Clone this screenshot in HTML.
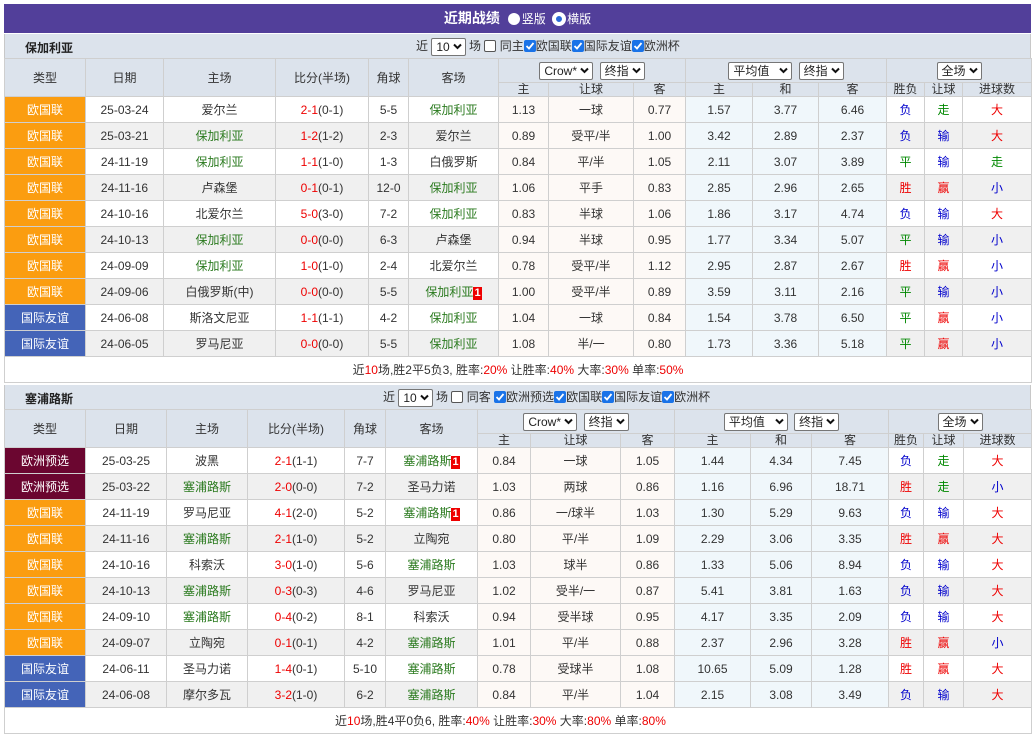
<!DOCTYPE html>
<html><head><meta charset="utf-8"><style>
*{box-sizing:border-box;margin:0;padding:0}
body{width:1033px;height:736px;background:#fff;font-family:"Liberation Sans","Noto Sans CJK SC",sans-serif;font-size:12px;color:#333;position:relative;overflow:hidden}
.title{position:absolute;left:4px;top:4px;width:1027px;height:29px;background:#523f9a;color:#fff;text-align:center;line-height:29px;font-size:14px;font-weight:bold}
.title .r{font-weight:normal;font-size:12px}
.rad{display:inline-block;width:12px;height:12px;border-radius:50%;background:#fff;vertical-align:-2px;margin:0 2px 0 4px}
.rad.on{border:3px solid #fff;background:#2a6ad8;box-shadow:0 0 0 1px #fff}
.sec{position:absolute;left:4px;width:1027px;height:25px;background:#dce3ec;border-left:1px solid #c8c8c8;border-right:1px solid #c8c8c8}
.sec b{position:absolute;left:20px;top:5px;font-size:12px;color:#222}
.ctl{position:absolute;top:3px;font-size:12px;color:#333;white-space:nowrap;line-height:18px}
.sel{display:inline-block;border:1px solid #767676;border-radius:2px;background:#fff;height:18px;line-height:16px;padding:0 3px 0 4px;font-size:12px;color:#222;vertical-align:middle}
.sel svg{width:9px;height:7px;margin-left:3px;vertical-align:1px}
.cb{display:inline-block;width:12px;height:12px;border-radius:2px;background:#1a73e8;vertical-align:middle;position:relative;top:-1px}
.cb svg{position:absolute;left:1px;top:1px;width:10px;height:10px}
.cb0{display:inline-block;width:12px;height:12px;border-radius:2px;border:1px solid #555;background:#fff;vertical-align:middle;position:relative;top:-1px}
table{position:absolute;left:4px;width:1027px;border-collapse:collapse;table-layout:fixed}
td{border:1px solid #cfcfcf;text-align:center;height:26px;font-size:12px;white-space:nowrap;overflow:hidden}
tr.h td{background:#dce3ec;color:#333;height:24px}
tr.h2 td{background:#dce3ec;height:14px;font-size:12px;line-height:13px}
tr.g td{background:#f0f0f0}
td.o1,tr.g td.o1{background:#fdf9f6}
td.o2,tr.g td.o2{background:#f0f7fb}
td.t1{background:#fb9d10!important;color:#fff}
td.t2{background:#4464b8!important;color:#fff}
td.t3{background:#6b0630!important;color:#fff}
.gn{color:#2a7a1e}.rd{color:#e00}.bl{color:#00c}.dk{color:#080}
.n1{display:inline-block;background:#e00;color:#fff;font-weight:bold;font-size:11px;line-height:13px;padding:0 1px}
td.sum{height:26px;background:#fff;text-align:center}
</style></head><body>
<svg width="0" height="0" style="position:absolute"><defs>
<symbol id="ch" viewBox="0 0 9 7"><path d="M1 1.5 L4.5 5 L8 1.5" fill="none" stroke="#111" stroke-width="2"/></symbol>
<symbol id="ck" viewBox="0 0 10 10"><path d="M1.5 5 L4 7.5 L8.5 2" fill="none" stroke="#fff" stroke-width="1.8"/></symbol>
</defs></svg>
<div class="title">近期战绩 <span class="r"><span class="rad"></span>竖版 <span class="rad on"></span>横版</span></div>

<div class="sec" style="top:34px"><b>保加利亚</b>
<div class="ctl" style="left:411px">近 <span class="sel">10<svg><use href="#ch"/></svg></span> 场 <span class="cb0"></span> 同主<span class="cb"><svg><use href="#ck"/></svg></span>欧国联<span class="cb"><svg><use href="#ck"/></svg></span>国际友谊<span class="cb"><svg><use href="#ck"/></svg></span>欧洲杯</div></div>

<table style="top:58px">
<colgroup><col style="width:81px"><col style="width:78px"><col style="width:112px"><col style="width:93px"><col style="width:40px"><col style="width:90px"><col style="width:50px"><col style="width:85px"><col style="width:52px"><col style="width:67px"><col style="width:66px"><col style="width:68px"><col style="width:38px"><col style="width:38px"><col style="width:69px"></colgroup>
<tr class="h"><td rowspan="2">类型</td><td rowspan="2">日期</td><td rowspan="2">主场</td><td rowspan="2">比分(半场)</td><td rowspan="2">角球</td><td rowspan="2">客场</td><td colspan="3"><span class="sel">Crow*<svg><use href="#ch"/></svg></span> &nbsp;<span class="sel">终指<svg><use href="#ch"/></svg></span></td><td colspan="3"><span class="sel">平均值 &nbsp;<svg><use href="#ch"/></svg></span> &nbsp;<span class="sel">终指<svg><use href="#ch"/></svg></span></td><td colspan="3"><span class="sel">全场<svg><use href="#ch"/></svg></span></td></tr>
<tr class="h2"><td>主</td><td>让球</td><td>客</td><td>主</td><td>和</td><td>客</td><td>胜负</td><td>让球</td><td>进球数</td></tr>
<tr><td class="t1">欧国联</td><td>25-03-24</td><td>爱尔兰</td><td><span class="rd">2-1</span>(0-1)</td><td>5-5</td><td class="gn">保加利亚</td><td class="o1">1.13</td><td class="o1">一球</td><td class="o1">0.77</td><td class="o2">1.57</td><td class="o2">3.77</td><td class="o2">6.46</td><td class="bl">负</td><td class="dk">走</td><td class="rd">大</td></tr>
<tr class="g"><td class="t1">欧国联</td><td>25-03-21</td><td class="gn">保加利亚</td><td><span class="rd">1-2</span>(1-2)</td><td>2-3</td><td>爱尔兰</td><td class="o1">0.89</td><td class="o1">受平/半</td><td class="o1">1.00</td><td class="o2">3.42</td><td class="o2">2.89</td><td class="o2">2.37</td><td class="bl">负</td><td class="bl">输</td><td class="rd">大</td></tr>
<tr><td class="t1">欧国联</td><td>24-11-19</td><td class="gn">保加利亚</td><td><span class="rd">1-1</span>(1-0)</td><td>1-3</td><td>白俄罗斯</td><td class="o1">0.84</td><td class="o1">平/半</td><td class="o1">1.05</td><td class="o2">2.11</td><td class="o2">3.07</td><td class="o2">3.89</td><td class="dk">平</td><td class="bl">输</td><td class="dk">走</td></tr>
<tr class="g"><td class="t1">欧国联</td><td>24-11-16</td><td>卢森堡</td><td><span class="rd">0-1</span>(0-1)</td><td>12-0</td><td class="gn">保加利亚</td><td class="o1">1.06</td><td class="o1">平手</td><td class="o1">0.83</td><td class="o2">2.85</td><td class="o2">2.96</td><td class="o2">2.65</td><td class="rd">胜</td><td class="rd">赢</td><td class="bl">小</td></tr>
<tr><td class="t1">欧国联</td><td>24-10-16</td><td>北爱尔兰</td><td><span class="rd">5-0</span>(3-0)</td><td>7-2</td><td class="gn">保加利亚</td><td class="o1">0.83</td><td class="o1">半球</td><td class="o1">1.06</td><td class="o2">1.86</td><td class="o2">3.17</td><td class="o2">4.74</td><td class="bl">负</td><td class="bl">输</td><td class="rd">大</td></tr>
<tr class="g"><td class="t1">欧国联</td><td>24-10-13</td><td class="gn">保加利亚</td><td><span class="rd">0-0</span>(0-0)</td><td>6-3</td><td>卢森堡</td><td class="o1">0.94</td><td class="o1">半球</td><td class="o1">0.95</td><td class="o2">1.77</td><td class="o2">3.34</td><td class="o2">5.07</td><td class="dk">平</td><td class="bl">输</td><td class="bl">小</td></tr>
<tr><td class="t1">欧国联</td><td>24-09-09</td><td class="gn">保加利亚</td><td><span class="rd">1-0</span>(1-0)</td><td>2-4</td><td>北爱尔兰</td><td class="o1">0.78</td><td class="o1">受平/半</td><td class="o1">1.12</td><td class="o2">2.95</td><td class="o2">2.87</td><td class="o2">2.67</td><td class="rd">胜</td><td class="rd">赢</td><td class="bl">小</td></tr>
<tr class="g"><td class="t1">欧国联</td><td>24-09-06</td><td>白俄罗斯(中)</td><td><span class="rd">0-0</span>(0-0)</td><td>5-5</td><td class="gn">保加利亚<span class="n1">1</span></td><td class="o1">1.00</td><td class="o1">受平/半</td><td class="o1">0.89</td><td class="o2">3.59</td><td class="o2">3.11</td><td class="o2">2.16</td><td class="dk">平</td><td class="bl">输</td><td class="bl">小</td></tr>
<tr><td class="t2">国际友谊</td><td>24-06-08</td><td>斯洛文尼亚</td><td><span class="rd">1-1</span>(1-1)</td><td>4-2</td><td class="gn">保加利亚</td><td class="o1">1.04</td><td class="o1">一球</td><td class="o1">0.84</td><td class="o2">1.54</td><td class="o2">3.78</td><td class="o2">6.50</td><td class="dk">平</td><td class="rd">赢</td><td class="bl">小</td></tr>
<tr class="g"><td class="t2">国际友谊</td><td>24-06-05</td><td>罗马尼亚</td><td><span class="rd">0-0</span>(0-0)</td><td>5-5</td><td class="gn">保加利亚</td><td class="o1">1.08</td><td class="o1">半/一</td><td class="o1">0.80</td><td class="o2">1.73</td><td class="o2">3.36</td><td class="o2">5.18</td><td class="dk">平</td><td class="rd">赢</td><td class="bl">小</td></tr>
<tr><td colspan="15" class="sum">近<span class="rd">10</span>场,胜2平5负3, 胜率:<span class="rd">20%</span> 让胜率:<span class="rd">40%</span> 大率:<span class="rd">30%</span> 单率:<span class="rd">50%</span></td></tr>
</table>

<div class="sec" style="top:385px"><b>塞浦路斯</b>
<div class="ctl" style="left:378px">近 <span class="sel">10<svg><use href="#ch"/></svg></span> 场 <span class="cb0"></span> 同客 <span class="cb"><svg><use href="#ck"/></svg></span>欧洲预选<span class="cb"><svg><use href="#ck"/></svg></span>欧国联<span class="cb"><svg><use href="#ck"/></svg></span>国际友谊<span class="cb"><svg><use href="#ck"/></svg></span>欧洲杯</div></div>

<table style="top:409px">
<colgroup><col style="width:81px"><col style="width:81px"><col style="width:81px"><col style="width:97px"><col style="width:41px"><col style="width:92px"><col style="width:53px"><col style="width:90px"><col style="width:54px"><col style="width:76px"><col style="width:61px"><col style="width:77px"><col style="width:35px"><col style="width:40px"><col style="width:68px"></colgroup>
<tr class="h"><td rowspan="2">类型</td><td rowspan="2">日期</td><td rowspan="2">主场</td><td rowspan="2">比分(半场)</td><td rowspan="2">角球</td><td rowspan="2">客场</td><td colspan="3"><span class="sel">Crow*<svg><use href="#ch"/></svg></span> &nbsp;<span class="sel">终指<svg><use href="#ch"/></svg></span></td><td colspan="3"><span class="sel">平均值 &nbsp;<svg><use href="#ch"/></svg></span> &nbsp;<span class="sel">终指<svg><use href="#ch"/></svg></span></td><td colspan="3"><span class="sel">全场<svg><use href="#ch"/></svg></span></td></tr>
<tr class="h2"><td>主</td><td>让球</td><td>客</td><td>主</td><td>和</td><td>客</td><td>胜负</td><td>让球</td><td>进球数</td></tr>
<tr><td class="t3">欧洲预选</td><td>25-03-25</td><td>波黑</td><td><span class="rd">2-1</span>(1-1)</td><td>7-7</td><td class="gn">塞浦路斯<span class="n1">1</span></td><td class="o1">0.84</td><td class="o1">一球</td><td class="o1">1.05</td><td class="o2">1.44</td><td class="o2">4.34</td><td class="o2">7.45</td><td class="bl">负</td><td class="dk">走</td><td class="rd">大</td></tr>
<tr class="g"><td class="t3">欧洲预选</td><td>25-03-22</td><td class="gn">塞浦路斯</td><td><span class="rd">2-0</span>(0-0)</td><td>7-2</td><td>圣马力诺</td><td class="o1">1.03</td><td class="o1">两球</td><td class="o1">0.86</td><td class="o2">1.16</td><td class="o2">6.96</td><td class="o2">18.71</td><td class="rd">胜</td><td class="dk">走</td><td class="bl">小</td></tr>
<tr><td class="t1">欧国联</td><td>24-11-19</td><td>罗马尼亚</td><td><span class="rd">4-1</span>(2-0)</td><td>5-2</td><td class="gn">塞浦路斯<span class="n1">1</span></td><td class="o1">0.86</td><td class="o1">一/球半</td><td class="o1">1.03</td><td class="o2">1.30</td><td class="o2">5.29</td><td class="o2">9.63</td><td class="bl">负</td><td class="bl">输</td><td class="rd">大</td></tr>
<tr class="g"><td class="t1">欧国联</td><td>24-11-16</td><td class="gn">塞浦路斯</td><td><span class="rd">2-1</span>(1-0)</td><td>5-2</td><td>立陶宛</td><td class="o1">0.80</td><td class="o1">平/半</td><td class="o1">1.09</td><td class="o2">2.29</td><td class="o2">3.06</td><td class="o2">3.35</td><td class="rd">胜</td><td class="rd">赢</td><td class="rd">大</td></tr>
<tr><td class="t1">欧国联</td><td>24-10-16</td><td>科索沃</td><td><span class="rd">3-0</span>(1-0)</td><td>5-6</td><td class="gn">塞浦路斯</td><td class="o1">1.03</td><td class="o1">球半</td><td class="o1">0.86</td><td class="o2">1.33</td><td class="o2">5.06</td><td class="o2">8.94</td><td class="bl">负</td><td class="bl">输</td><td class="rd">大</td></tr>
<tr class="g"><td class="t1">欧国联</td><td>24-10-13</td><td class="gn">塞浦路斯</td><td><span class="rd">0-3</span>(0-3)</td><td>4-6</td><td>罗马尼亚</td><td class="o1">1.02</td><td class="o1">受半/一</td><td class="o1">0.87</td><td class="o2">5.41</td><td class="o2">3.81</td><td class="o2">1.63</td><td class="bl">负</td><td class="bl">输</td><td class="rd">大</td></tr>
<tr><td class="t1">欧国联</td><td>24-09-10</td><td class="gn">塞浦路斯</td><td><span class="rd">0-4</span>(0-2)</td><td>8-1</td><td>科索沃</td><td class="o1">0.94</td><td class="o1">受半球</td><td class="o1">0.95</td><td class="o2">4.17</td><td class="o2">3.35</td><td class="o2">2.09</td><td class="bl">负</td><td class="bl">输</td><td class="rd">大</td></tr>
<tr class="g"><td class="t1">欧国联</td><td>24-09-07</td><td>立陶宛</td><td><span class="rd">0-1</span>(0-1)</td><td>4-2</td><td class="gn">塞浦路斯</td><td class="o1">1.01</td><td class="o1">平/半</td><td class="o1">0.88</td><td class="o2">2.37</td><td class="o2">2.96</td><td class="o2">3.28</td><td class="rd">胜</td><td class="rd">赢</td><td class="bl">小</td></tr>
<tr><td class="t2">国际友谊</td><td>24-06-11</td><td>圣马力诺</td><td><span class="rd">1-4</span>(0-1)</td><td>5-10</td><td class="gn">塞浦路斯</td><td class="o1">0.78</td><td class="o1">受球半</td><td class="o1">1.08</td><td class="o2">10.65</td><td class="o2">5.09</td><td class="o2">1.28</td><td class="rd">胜</td><td class="rd">赢</td><td class="rd">大</td></tr>
<tr class="g"><td class="t2">国际友谊</td><td>24-06-08</td><td>摩尔多瓦</td><td><span class="rd">3-2</span>(1-0)</td><td>6-2</td><td class="gn">塞浦路斯</td><td class="o1">0.84</td><td class="o1">平/半</td><td class="o1">1.04</td><td class="o2">2.15</td><td class="o2">3.08</td><td class="o2">3.49</td><td class="bl">负</td><td class="bl">输</td><td class="rd">大</td></tr>
<tr><td colspan="15" class="sum" style="text-align:left;padding-left:330px">近<span class="rd">10</span>场,胜4平0负6, 胜率:<span class="rd">40%</span> 让胜率:<span class="rd">30%</span> 大率:<span class="rd">80%</span> 单率:<span class="rd">80%</span></td></tr>
</table>
</body></html>
